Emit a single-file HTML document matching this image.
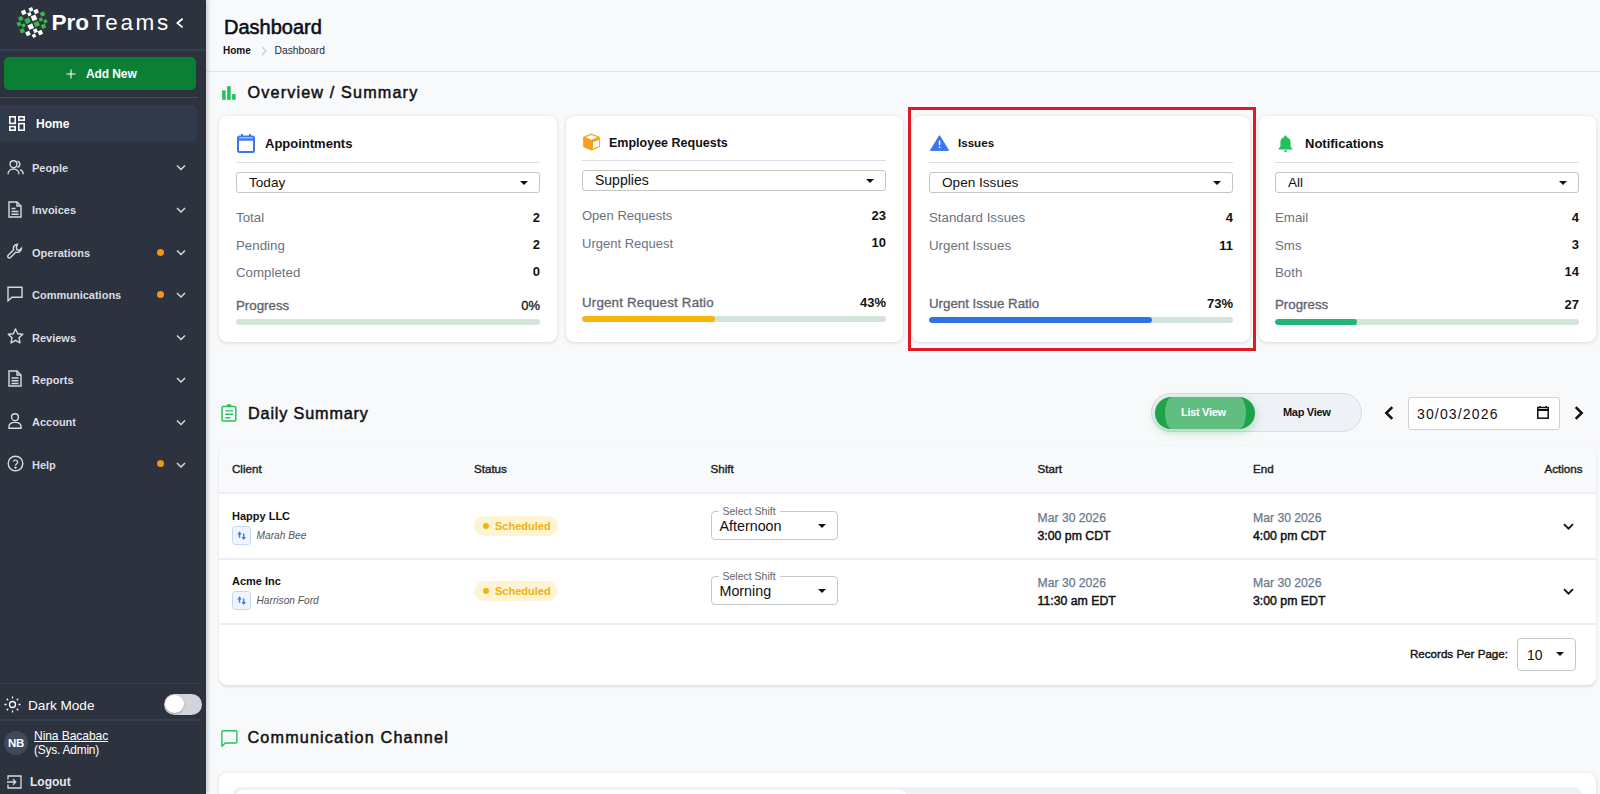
<!DOCTYPE html>
<html><head><meta charset="utf-8">
<style>
*{box-sizing:border-box;margin:0;padding:0}
html,body{width:1600px;height:794px;overflow:hidden;font-family:"Liberation Sans",sans-serif;background:#f8f9fb;color:#111}
.a{position:absolute;white-space:nowrap;line-height:1}
#sb{position:absolute;left:0;top:0;width:206px;height:794px;background:#2c323e;box-shadow:2px 0 4px rgba(0,0,0,.18);z-index:5}
.sep{position:absolute;left:0;width:206px;height:1px;background:#38424f}
.nt{position:absolute;left:32px;color:#dadde3;font-size:11px;font-weight:bold;line-height:1;white-space:nowrap}
.dot{position:absolute;left:157px;width:7px;height:7px;border-radius:50%;background:#f6921e}
.card{position:absolute;background:#fff;border-radius:8px;box-shadow:0 1px 4px rgba(0,0,0,.11),0 0 1.5px rgba(0,0,0,.08)}
.ttl{position:absolute;font-size:13px;font-weight:bold;color:#111;line-height:1;white-space:nowrap}
.hr{position:absolute;height:1.4px;background:#d6deea}
.sel{position:absolute;height:21px;border:1px solid #c4c4c4;border-radius:3px;background:#fff}
.sel span{position:absolute;left:12px;top:4px;font-size:13.6px;line-height:1;color:#111}
.tri{position:absolute;width:0;height:0;border-left:4.2px solid transparent;border-right:4.2px solid transparent;border-top:4.6px solid #111}
.lb{position:absolute;font-size:13px;color:#6b7280;line-height:1;white-space:nowrap}
.vl{position:absolute;font-size:13px;font-weight:bold;color:#111;line-height:1;text-align:right;white-space:nowrap}
.pl{position:absolute;font-size:13.3px;font-weight:normal;-webkit-text-stroke:0.35px #5f6673;color:#5f6673;line-height:1;white-space:nowrap}
.trk{position:absolute;height:6px;border-radius:3px;background:#d3e5d9;overflow:hidden}
.trk i{position:absolute;left:0;top:0;height:6px;border-radius:3px}
.th{position:absolute;font-size:11.6px;font-weight:normal;-webkit-text-stroke:0.4px #222;color:#222;line-height:1;white-space:nowrap}
.cl{position:absolute;font-size:11px;font-weight:bold;color:#111;line-height:1;white-space:nowrap}
.sw{position:absolute;width:18.5px;height:18.5px;border:1px solid #c3d8f8;background:#eff5fe;border-radius:3.5px}
.emp{position:absolute;font-size:10.2px;font-style:italic;color:#555;line-height:1;white-space:nowrap}
.badge{position:absolute;width:84px;height:20px;border-radius:10px;background:#fdf4d3}
.badge i{position:absolute;left:9px;top:7px;width:6px;height:6px;border-radius:50%;background:#f5b014}
.badge span{position:absolute;left:21px;top:4.5px;font-size:11px;font-weight:bold;color:#f4b00c;line-height:1}
.ss{position:absolute;width:127px;height:29px;border:1px solid #c8c8c8;border-radius:4px;background:#fff}
.ss .lbl{position:absolute;left:7px;top:-6px;padding:0 4px;background:#fff;font-size:10.5px;color:#666;line-height:1}
.ss .v{position:absolute;left:8px;top:7px;font-size:14.3px;color:#111;line-height:1}
.ss .tri{left:106px;top:12px}
.dt1{position:absolute;font-size:12.2px;color:#6b7a8c;-webkit-text-stroke:0.25px #6b7a8c;line-height:1;white-space:nowrap}
.dt2{position:absolute;font-size:12.3px;font-weight:normal;-webkit-text-stroke:0.45px #111;color:#111;line-height:1;white-space:nowrap}
.rb{position:absolute;left:219px;width:1377px;height:2px;background:#eceef1}
</style></head>
<body>
<div id="sb">
  <svg class="a" style="left:14px;top:4px" width="36" height="36" viewBox="0 0 36 36"><rect x="7.57" y="6.28" width="4.25" height="4.25" transform="rotate(-24 9.7 8.4)" fill="#fff"/><rect x="15.09" y="3.49" width="3.82" height="3.82" transform="rotate(-24 17.0 5.4)" fill="#fff"/><rect x="13.70" y="8.50" width="3.40" height="3.40" transform="rotate(-24 15.4 10.2)" fill="#fff"/><rect x="20.07" y="5.38" width="4.25" height="4.25" transform="rotate(-24 22.2 7.5)" fill="#fff"/><rect x="17.45" y="11.35" width="5.10" height="5.10" transform="rotate(-24 20.0 13.9)" fill="#fff"/><rect x="14.25" y="20.15" width="5.10" height="5.10" transform="rotate(-24 16.8 22.7)" fill="#fff"/><rect x="11.88" y="27.38" width="4.25" height="4.25" transform="rotate(-24 14.0 29.5)" fill="#fff"/><rect x="18.30" y="30.10" width="3.40" height="3.40" transform="rotate(-24 20.0 31.8)" fill="#fff"/><rect x="19.49" y="24.89" width="3.82" height="3.82" transform="rotate(-24 21.4 26.8)" fill="#fff"/><rect x="24.18" y="26.48" width="4.25" height="4.25" transform="rotate(-24 26.3 28.6)" fill="#fff"/><rect x="4.67" y="12.38" width="4.25" height="4.25" transform="rotate(-24 6.8 14.5)" fill="#3cb54a"/><rect x="3.09" y="18.09" width="3.82" height="3.82" transform="rotate(-24 5.0 20.0)" fill="#3cb54a"/><rect x="7.80" y="19.70" width="3.40" height="3.40" transform="rotate(-24 9.5 21.4)" fill="#3cb54a"/><rect x="11.05" y="14.25" width="5.10" height="5.10" transform="rotate(-24 13.6 16.8)" fill="#3cb54a"/><rect x="6.07" y="24.68" width="4.25" height="4.25" transform="rotate(-24 8.2 26.8)" fill="#3cb54a"/><rect x="20.15" y="17.45" width="5.10" height="5.10" transform="rotate(-24 22.7 20.0)" fill="#3cb54a"/><rect x="26.48" y="7.88" width="4.25" height="4.25" transform="rotate(-24 28.6 10.0)" fill="#3cb54a"/><rect x="25.10" y="13.80" width="3.40" height="3.40" transform="rotate(-24 26.8 15.5)" fill="#3cb54a"/><rect x="29.70" y="15.60" width="3.40" height="3.40" transform="rotate(-24 31.4 17.3)" fill="#3cb54a"/><rect x="27.38" y="20.18" width="4.25" height="4.25" transform="rotate(-24 29.5 22.3)" fill="#3cb54a"/></svg>
  <div class="a" style="left:51.5px;top:11.5px;font-size:22.5px;color:#fff;font-weight:bold">Pro</div><div class="a" style="left:91.5px;top:11.5px;font-size:22.5px;color:#fff;letter-spacing:2.6px">Teams</div>
  <svg class="a" style="left:176px;top:17.8px" width="8" height="11" viewBox="0 0 8 11"><path d="M6.6 0.8 L1.4 5.1 L6.6 9.4" fill="none" stroke="#fff" stroke-width="1.8"/></svg>
  <div class="sep" style="top:49.3px;height:1.6px;background:#334052"></div>
  <div class="a" style="left:4px;top:57px;width:192px;height:33px;background:#0a7f35;border-radius:5px"></div>
  <svg class="a" style="left:66px;top:69px" width="10" height="10" viewBox="0 0 10 10"><path d="M5 0.5V9.5M0.5 5H9.5" stroke="#fff" stroke-width="1.1"/></svg>
  <div class="a" style="left:86px;top:67.6px;color:#fff;font-size:12px;font-weight:bold;letter-spacing:-0.1px">Add New</div>
  <div class="sep" style="top:97px;width:198px;background:#4a505b"></div>
  <div class="a" style="left:0;top:105px;width:198px;height:37px;background:#313a4b;border-radius:0 7px 7px 0"></div>
  <!-- home icon -->
  <svg class="a" style="left:9px;top:116px" width="16" height="15" viewBox="0 0 16 15" fill="none" stroke="#fff" stroke-width="1.6">
    <rect x="0.8" y="0.8" width="5.4" height="6.6"/><rect x="9.8" y="0.8" width="5.4" height="3.4"/><rect x="0.8" y="10.6" width="5.4" height="3.6"/><rect x="9.8" y="7.6" width="5.4" height="6.6"/>
  </svg>
  <div class="nt" style="left:36px;top:117.5px;font-size:12px;color:#fff">Home</div>
  <!-- People -->
  <svg class="a" style="left:7px;top:160px" width="17" height="15" viewBox="0 0 17 15" fill="none" stroke="#d6dae1" stroke-width="1.4"><circle cx="6.5" cy="4.2" r="3.4"/><path d="M1 14.3c0-3.2 2.4-5.3 5.5-5.3s5.5 2.1 5.5 5.3"/><path d="M10.5 1.2a3.3 3.3 0 0 1 0 6.3M13 9.6c1.9.7 3.2 2.4 3.2 4.7"/></svg>
  <div class="nt" style="top:162.5px">People</div>
  <!-- Invoices -->
  <svg class="a" style="left:8px;top:201px" width="14" height="17" viewBox="0 0 14 17" fill="none" stroke="#d6dae1" stroke-width="1.4"><path d="M1 1h8l4 4v11H1z"/><path d="M9 1v4h4M3.5 7.5h4M3.5 10.5h7M3.5 13.2h7"/></svg>
  <div class="nt" style="top:205px">Invoices</div>
  <!-- Operations -->
  <svg class="a" style="left:7px;top:243px" width="17" height="17" viewBox="0 0 17 17" fill="none" stroke="#d6dae1" stroke-width="1.4"><path d="M10.5 1.2a4.2 4.2 0 0 0-3.9 5.6L1.2 12.2a1.6 1.6 0 0 0 2.3 2.3l5.4-5.4a4.2 4.2 0 0 0 5.6-3.9l-2.3 2.2-2.3-.6-.6-2.3z"/></svg>
  <div class="nt" style="top:247.5px">Operations</div>
  <!-- Communications -->
  <svg class="a" style="left:7px;top:286px" width="16" height="16" viewBox="0 0 16 16" fill="none" stroke="#d6dae1" stroke-width="1.4"><path d="M1 1.2h14v10H5L1 14.8z"/></svg>
  <div class="nt" style="top:290px">Communications</div>
  <!-- Reviews -->
  <svg class="a" style="left:7px;top:328px" width="17" height="16" viewBox="0 0 17 16" fill="none" stroke="#d6dae1" stroke-width="1.4" stroke-linejoin="round"><path d="M8.5 1l2.2 4.7 5.1.6-3.8 3.5 1 5.1-4.5-2.6-4.5 2.6 1-5.1L1.2 6.3l5.1-.6z"/></svg>
  <div class="nt" style="top:332.5px">Reviews</div>
  <!-- Reports -->
  <svg class="a" style="left:8px;top:370px" width="14" height="17" viewBox="0 0 14 17" fill="none" stroke="#d6dae1" stroke-width="1.4"><path d="M1 1h8l4 4v11H1z"/><path d="M9 1v4h4M3.5 8h7M3.5 10.8h7M3.5 13.5h7"/></svg>
  <div class="nt" style="top:375px">Reports</div>
  <!-- Account -->
  <svg class="a" style="left:8px;top:413px" width="14" height="16" viewBox="0 0 14 16" fill="none" stroke="#d6dae1" stroke-width="1.4"><circle cx="7" cy="4.2" r="3.4"/><path d="M1 15.3v-1.5c0-2.6 2-4.4 6-4.4s6 1.8 6 4.4v1.5z"/></svg>
  <div class="nt" style="top:417px">Account</div>
  <!-- Help -->
  <svg class="a" style="left:7px;top:455px" width="17" height="17" viewBox="0 0 17 17" fill="none" stroke="#d6dae1" stroke-width="1.4"><circle cx="8.5" cy="8.5" r="7.3"/><path d="M6.3 6.5a2.3 2.3 0 0 1 4.4.8c0 1.5-2.2 1.9-2.2 3.2"/><circle cx="8.5" cy="12.6" r=".5" fill="#d6dae1"/></svg>
  <div class="nt" style="top:460px">Help</div>
  <div class="dot" style="top:249px"></div>
  <div class="dot" style="top:291px"></div>
  <div class="dot" style="top:460px"></div>
  <svg class="a" style="left:176px;top:165px" width="10" height="310" viewBox="0 0 10 310" fill="none" stroke="#d6dae1" stroke-width="1.5">
    <path d="M1 0.5l4 4 4-4"/><path d="M1 43l4 4 4-4"/><path d="M1 85.5l4 4 4-4"/><path d="M1 128l4 4 4-4"/><path d="M1 170.5l4 4 4-4"/><path d="M1 213l4 4 4-4"/><path d="M1 255.5l4 4 4-4"/><path d="M1 298l4 4 4-4"/>
  </svg>

  <div class="sep" style="top:682.8px;width:202px;height:1.6px;background:#334052"></div>
  <svg class="a" style="left:4px;top:696px" width="17" height="17" viewBox="0 0 17 17" fill="none" stroke="#fff" stroke-width="1.3"><circle cx="8.5" cy="8.5" r="3"/><path d="M8.5 0.5v2M8.5 14.5v2M0.5 8.5h2M14.5 8.5h2M2.8 2.8l1.4 1.4M12.8 12.8l1.4 1.4M2.8 14.2l1.4-1.4M12.8 4.2l1.4-1.4"/></svg>
  <div class="a" style="left:28px;top:698.5px;font-size:13.6px;color:#fff">Dark Mode</div>
  <div class="a" style="left:164px;top:694px;width:38px;height:21px;border-radius:11px;background:#d1d5db"></div>
  <div class="a" style="left:165px;top:695.3px;width:18.5px;height:18px;border-radius:50%;background:#fff;box-shadow:0 1px 2px rgba(0,0,0,.25)"></div>
  <div class="sep" style="top:719.3px;width:202px;height:1.6px;background:#334052"></div>
  <div class="a" style="left:4px;top:731px;width:24px;height:24px;border-radius:50%;background:#3f4a5c"></div>
  <div class="a" style="left:8px;top:738px;font-size:11.5px;font-weight:bold;color:#fff;letter-spacing:-0.3px">NB</div>
  <div class="a" style="left:34px;top:730.3px;font-size:12.1px;color:#fff;text-decoration:underline;letter-spacing:-0.1px">Nina Bacabac</div>
  <div class="a" style="left:34px;top:744.6px;font-size:11.9px;color:#fff;letter-spacing:-0.2px">(Sys. Admin)</div>
  <svg class="a" style="left:7px;top:775px" width="15" height="14" viewBox="0 0 15 14" fill="none" stroke="#d6dae1" stroke-width="1.3"><path d="M1 4.5V1h13v12H1V9.5"/><path d="M0 7h8.5M6 4.3L8.7 7 6 9.7"/></svg>
  <div class="a" style="left:30px;top:775.5px;font-size:12px;font-weight:bold;color:#e4e7ec">Logout</div>
</div>

<!-- HEADER -->
<div class="a" style="left:224px;top:17.3px;font-size:20px;-webkit-text-stroke:0.55px #0b0f19;color:#0b0f19">Dashboard</div>
<div class="a" style="left:223px;top:46.3px;font-size:10px;font-weight:bold;color:#111">Home</div>
<svg class="a" style="left:261px;top:46px" width="6" height="10" viewBox="0 0 6 10"><path d="M1 1l4 4-4 4" fill="none" stroke="#c5c9cf" stroke-width="1.2"/></svg>
<div class="a" style="left:274.5px;top:46.3px;font-size:10.3px;color:#1f2937">Dashboard</div>
<div class="a" style="left:206px;top:70.8px;width:1394px;height:1.3px;background:#e0e3e7"></div>

<!-- OVERVIEW -->
<svg class="a" style="left:222px;top:86px" width="14" height="14" viewBox="0 0 14 14" fill="#22c35a"><rect x="0.1" y="4.4" width="3.6" height="9.4"/><rect x="5.1" y="0.2" width="3.6" height="13.6"/><rect x="10.1" y="8.1" width="3.6" height="5.7"/></svg>
<div class="a" style="left:247.5px;top:83.5px;font-size:16.2px;-webkit-text-stroke:0.5px #111;letter-spacing:1.15px;color:#111">Overview / Summary</div>

<!-- CARD 1 -->
<div class="card" style="left:219px;top:116px;width:338px;height:226px"></div>

<svg class="a" style="left:237px;top:134px" width="18" height="19" viewBox="0 0 18 19" fill="none" stroke="#3b78f0" stroke-width="2"><rect x="1" y="2.5" width="16" height="15.5" rx="1.5"/><path d="M1 5.5h16" stroke-width="2.5"/><path d="M5 0v3M13 0v3"/></svg>
<div class="ttl" style="left:265px;top:137px">Appointments</div>
<div class="hr" style="left:236px;top:161.5px;width:304px"></div>
<div class="sel" style="left:236px;top:172px;width:304px"><span style="top:3px">Today</span><i class="tri" style="left:283px;top:8px"></i></div>
<div class="lb" style="left:236px;top:211.3px;font-size:13.3px">Total</div><div class="vl" style="left:490px;width:50px;top:210.8px">2</div>
<div class="lb" style="left:236px;top:238.9px;font-size:13.3px">Pending</div><div class="vl" style="left:490px;width:50px;top:238.4px">2</div>
<div class="lb" style="left:236px;top:265.7px;font-size:13.3px">Completed</div><div class="vl" style="left:490px;width:50px;top:265.2px">0</div>
<div class="pl" style="left:236px;top:299px;font-size:13.3px">Progress</div><div class="vl" style="left:480px;width:60px;top:298.7px;font-weight:normal;-webkit-text-stroke:0.3px #111">0%</div>
<div class="trk" style="left:236px;top:319px;width:304px"></div>

<!-- CARD 2 -->
<div class="card" style="left:566px;top:116px;width:337px;height:226px"></div>

<svg class="a" style="left:582px;top:133px" width="19" height="18" viewBox="0 0 19 18"><path d="M9.5 0.9L17.6 4.2v9.6l-8.1 3.4-8.1-3.4V4.2z" fill="#f4a21d" stroke="#f4a21d" stroke-width="0.8" stroke-linejoin="round"/><path d="M11 9.3l6-2.2v6.2L11 15.6z" fill="#fff"/><path d="M3.5 4.3l6-2.3 6 2.3-6 2.4z" fill="#fff"/></svg>
<div class="ttl" style="left:609px;top:136.6px;font-size:12.5px">Employee Requests</div>
<div class="hr" style="left:582px;top:159.5px;width:304px"></div>
<div class="sel" style="left:582px;top:170px;width:304px"><span style="font-size:14px;top:1.8px">Supplies</span><i class="tri" style="left:283px;top:8px"></i></div>
<div class="lb" style="left:582px;top:209.3px;font-size:13px">Open Requests</div><div class="vl" style="left:836px;width:50px;top:208.8px">23</div>
<div class="lb" style="left:582px;top:236.6px;font-size:13px">Urgent Request</div><div class="vl" style="left:836px;width:50px;top:236.1px">10</div>
<div class="pl" style="left:582px;top:296.4px;font-size:13.3px;letter-spacing:0.2px">Urgent Request Ratio<span style="letter-spacing:0"></span></div><div class="vl" style="left:826px;width:60px;top:296.09999999999997px;">43%</div>
<div class="trk" style="left:582px;top:316px;width:304px"><i style="width:133px;background:#f6b40c"></i></div>

<!-- CARD 3 -->
<div class="card" style="left:912px;top:116px;width:338px;height:226px"></div>
<div class="a" style="left:908px;top:106.5px;width:348px;height:244px;border:3px solid #df1a22"></div>
<svg class="a" style="left:930px;top:134px" width="19" height="17" viewBox="0 0 19 17"><path d="M9.5 1.6L18.6 16.4H0.4z" fill="#3b78f0" stroke="#3b78f0" stroke-linejoin="round"/><rect x="8.8" y="6.6" width="1.5" height="4.4" fill="#fff"/><rect x="8.8" y="12.5" width="1.5" height="1.5" fill="#fff"/></svg>
<div class="ttl" style="left:958px;top:137.3px;font-size:11.6px">Issues</div>
<div class="hr" style="left:929px;top:161.5px;width:304px"></div>
<div class="sel" style="left:929px;top:172px;width:304px"><span style="top:3px">Open Issues</span><i class="tri" style="left:283px;top:8px"></i></div>
<div class="lb" style="left:929px;top:211.2px;font-size:13.3px">Standard Issues</div><div class="vl" style="left:1183px;width:50px;top:210.7px">4</div>
<div class="lb" style="left:929px;top:239.2px;font-size:13.3px">Urgent Issues</div><div class="vl" style="left:1183px;width:50px;top:238.7px">11</div>
<div class="pl" style="left:929px;top:297px;font-size:13.3px">Urgent Issue Ratio</div><div class="vl" style="left:1173px;width:60px;top:296.7px;">73%</div>
<div class="trk" style="left:929px;top:317px;width:304px"><i style="width:223px;background:#2f72e4"></i></div>

<!-- CARD 4 -->
<div class="card" style="left:1259px;top:116px;width:337px;height:226px"></div>

<svg class="a" style="left:1278px;top:135px" width="15" height="17" viewBox="0 0 15 17" fill="#22c05a"><path d="M7.5 0.5c.8 0 1.3.6 1.3 1.3v.5c2.3.6 3.8 2.6 3.8 5v4.2l1.8 2.2v.8H0.6v-.8l1.8-2.2V7.3c0-2.4 1.5-4.4 3.8-5v-.5c0-.7.5-1.3 1.3-1.3z"/><path d="M5.8 15.3h3.4a1.7 1.7 0 0 1-3.4 0z"/></svg>
<div class="ttl" style="left:1305px;top:137.3px">Notifications</div>
<div class="hr" style="left:1275px;top:161.5px;width:304px"></div>
<div class="sel" style="left:1275px;top:172px;width:304px"><span style="top:3px">All</span><i class="tri" style="left:283px;top:8px"></i></div>
<div class="lb" style="left:1275px;top:211.4px;font-size:13.3px">Email</div><div class="vl" style="left:1529px;width:50px;top:210.9px">4</div>
<div class="lb" style="left:1275px;top:238.7px;font-size:13.3px">Sms</div><div class="vl" style="left:1529px;width:50px;top:238.2px">3</div>
<div class="lb" style="left:1275px;top:265.5px;font-size:13.3px">Both</div><div class="vl" style="left:1529px;width:50px;top:265.0px">14</div>
<div class="pl" style="left:1275px;top:298.3px;font-size:13.3px">Progress</div><div class="vl" style="left:1519px;width:60px;top:298.0px;">27</div>
<div class="trk" style="left:1275px;top:318.7px;width:304px"><i style="width:82px;background:#21b37b"></i></div>

<!-- DAILY SUMMARY -->
<svg class="a" style="left:221px;top:404px" width="16" height="19" viewBox="0 0 16 19" fill="none" stroke="#22c35a" stroke-width="1.5"><rect x="1.05" y="2.6" width="13.75" height="14.5" rx="1.3"/><path d="M6.2 2.6a1.8 1.6 0 0 1 3.6 0" stroke-width="1.8"/><path d="M4.2 6.9h7.9M4.2 10.25h7.9M4.2 13.8h5.1" stroke-width="1.4"/></svg>
<div class="a" style="left:248px;top:405px;font-size:16.2px;-webkit-text-stroke:0.5px #111;letter-spacing:0.85px;color:#111">Daily Summary</div>

<div class="a" style="left:1151px;top:393px;width:211px;height:39px;border-radius:20px;background:#eef1f5;border:1px solid #d6dce4"></div>
<div class="a" style="left:1155px;top:397px;width:100px;height:32px;border-radius:16px;background:#1fa34a;box-shadow:0 3px 8px rgba(34,178,76,.35)"></div>
<div class="a" style="left:1165px;top:397px;width:81px;height:32px;border-radius:7px/16px;background:#5fbe80"></div>
<div class="a" style="left:1181px;top:407px;font-size:11px;font-weight:bold;color:#fff;letter-spacing:-0.3px">List View</div>
<div class="a" style="left:1283px;top:407px;font-size:11px;font-weight:bold;color:#111;letter-spacing:-0.3px">Map View</div>
<svg class="a" style="left:1384px;top:406px" width="10" height="14" viewBox="0 0 10 14"><path d="M8.3 1.2L2.3 7 8.3 12.8" fill="none" stroke="#111" stroke-width="2.5"/></svg>
<div class="a" style="left:1407.5px;top:396.5px;width:152px;height:33px;border:1px solid #cfd3d8;border-radius:3px;background:#fff"></div>
<div class="a" style="left:1417px;top:407px;font-size:14px;color:#111;letter-spacing:1.15px">30/03/2026</div>
<svg class="a" style="left:1537px;top:406px" width="12" height="13" viewBox="0 0 12 13" fill="none" stroke="#111" stroke-width="1.5"><rect x="0.8" y="1.5" width="10.4" height="10.7"/><path d="M0.8 4h10.4" stroke-width="2"/><path d="M3 0v2M9 0v2"/></svg>
<svg class="a" style="left:1574px;top:406px" width="10" height="14" viewBox="0 0 10 14"><path d="M1.7 1.2L7.7 7 1.7 12.8" fill="none" stroke="#111" stroke-width="2.5"/></svg>

<!-- TABLE -->
<div class="card" style="left:219px;top:446px;width:1377px;height:239px;border-radius:8px;box-shadow:0 1.5px 3px rgba(0,0,0,.10),0 0 1px rgba(0,0,0,.07)"></div>
<div class="a" style="left:219px;top:446px;width:1377px;height:47px;background:#f8f9fb;border-radius:8px 8px 0 0"></div>
<div class="rb" style="top:492px"></div>
<div class="th" style="left:232px;top:462.5px">Client</div>
<div class="th" style="left:474px;top:462.5px">Status</div>
<div class="th" style="left:710.5px;top:462.5px">Shift</div>
<div class="th" style="left:1037.5px;top:462.5px">Start</div>
<div class="th" style="left:1253px;top:462.5px">End</div>
<div class="th" style="left:1544.5px;top:462.5px">Actions</div>

<div class="cl" style="left:232px;top:510.6px">Happy LLC</div>
<div class="sw" style="left:232.2px;top:526.2px"></div>
<svg class="a" style="left:236px;top:530px" width="14" height="12" viewBox="0 0 14 12"><path d="M3.5 3.5V7.8M7.7 3.5V8" stroke="#3b78f0" stroke-width="1.4" fill="none"/><path d="M1.2 4.6L3.5 1.3 5.8 4.6z M5.4 7L7.7 10 10 7z" fill="#3b78f0"/></svg>
<div class="emp" style="left:256.5px;top:531px">Marah Bee</div>
<div class="badge" style="left:474px;top:516px"><i></i><span>Scheduled</span></div>
<div class="ss" style="left:710.5px;top:511.3px"><span class="lbl">Select Shift</span><span class="v">Afternoon</span><i class="tri"></i></div>
<div class="dt1" style="left:1037.5px;top:512.4px">Mar 30 2026</div>
<div class="dt2" style="left:1037.5px;top:530.3px">3:00 pm CDT</div>
<div class="dt1" style="left:1253px;top:512.4px">Mar 30 2026</div>
<div class="dt2" style="left:1253px;top:530.3px">4:00 pm CDT</div>
<svg class="a" style="left:1563px;top:523px" width="11" height="8" viewBox="0 0 11 8"><path d="M1 1.2l4.5 4.5L10 1.2" fill="none" stroke="#111" stroke-width="1.8"/></svg>
<div class="rb" style="top:557.5px"></div>

<div class="cl" style="left:232px;top:575.6px">Acme Inc</div>
<div class="sw" style="left:232.2px;top:591.2px"></div>
<svg class="a" style="left:236px;top:595px" width="14" height="12" viewBox="0 0 14 12"><path d="M3.5 3.5V7.8M7.7 3.5V8" stroke="#3b78f0" stroke-width="1.4" fill="none"/><path d="M1.2 4.6L3.5 1.3 5.8 4.6z M5.4 7L7.7 10 10 7z" fill="#3b78f0"/></svg>
<div class="emp" style="left:256.5px;top:596px">Harrison Ford</div>
<div class="badge" style="left:474px;top:581px"><i></i><span>Scheduled</span></div>
<div class="ss" style="left:710.5px;top:576px"><span class="lbl">Select Shift</span><span class="v">Morning</span><i class="tri"></i></div>
<div class="dt1" style="left:1037.5px;top:577.4px">Mar 30 2026</div>
<div class="dt2" style="left:1037.5px;top:595.3px">11:30 am EDT</div>
<div class="dt1" style="left:1253px;top:577.4px">Mar 30 2026</div>
<div class="dt2" style="left:1253px;top:595.3px">3:00 pm EDT</div>
<svg class="a" style="left:1563px;top:588px" width="11" height="8" viewBox="0 0 11 8"><path d="M1 1.2l4.5 4.5L10 1.2" fill="none" stroke="#111" stroke-width="1.8"/></svg>
<div class="rb" style="top:623px"></div>

<div class="a" style="left:1410px;top:648px;font-size:11.6px;-webkit-text-stroke:0.4px #111;color:#111">Records Per Page:</div>
<div class="a" style="left:1517px;top:638px;width:59px;height:33px;border:1px solid #c8c8c8;border-radius:4px;background:#fff"></div>
<div class="a" style="left:1527px;top:647.5px;font-size:14px;color:#111">10</div>
<i class="tri" style="left:1556px;top:652px"></i>

<!-- COMMUNICATION CHANNEL -->
<svg class="a" style="left:221px;top:729.5px" width="17" height="17" viewBox="0 0 17 17" fill="none" stroke="#22c35a" stroke-width="1.4" stroke-linejoin="round"><path d="M0.9 16.2V2a1.2 1.2 0 0 1 1.2-1.2h12.6a1.2 1.2 0 0 1 1.2 1.2v9.8a1.2 1.2 0 0 1-1.2 1.2H4.3z"/></svg>
<div class="a" style="left:247.5px;top:728.5px;font-size:16.2px;-webkit-text-stroke:0.5px #111;letter-spacing:1.15px;color:#111">Communication Channel</div>
<div class="card" style="left:219px;top:772.5px;width:1377px;height:40px"></div>
<div class="a" style="left:233px;top:786.5px;width:1349px;height:20px;border-radius:8px;background:#eef2f6"></div>
<div class="a" style="left:236px;top:789.7px;width:671px;height:20px;border-radius:8px;background:#fff"></div>
</body></html>
